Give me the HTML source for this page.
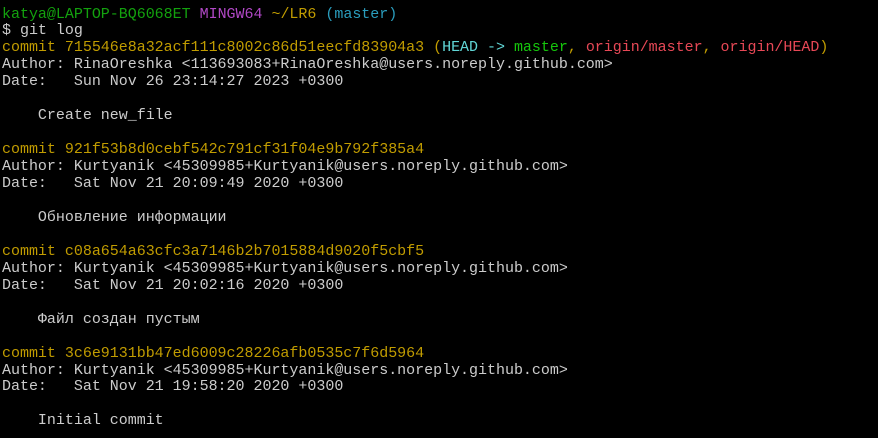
<!DOCTYPE html>
<html><head><meta charset="utf-8"><style>
html,body{margin:0;background:#000;width:878px;height:438px;overflow:hidden}
pre{margin:0;position:absolute;left:2px;top:6.5px;font-family:"Liberation Mono","DejaVu Sans Mono",monospace;font-size:15px;line-height:16.95px;letter-spacing:-0.02px;color:#cccccc;white-space:pre}
.g{color:#13a10e}.m{color:#b148c6}.y{color:#c19c00}.t{color:#2a9dbd}.c{color:#61d6d6}.lg{color:#16c60c}.r{color:#e74856}
</style></head><body><pre><span class="g">katya@LAPTOP-BQ6068ET</span> <span class="m">MINGW64</span> <span class="y">~/LR6</span> <span class="t">(master)</span>
$ git log
<span class="y">commit 715546e8a32acf111c8002c86d51eecfd83904a3 (</span><span class="c">HEAD -&gt; </span><span class="lg">master</span><span class="y">, </span><span class="r">origin/master</span><span class="y">, </span><span class="r">origin/HEAD</span><span class="y">)</span>
Author: RinaOreshka &lt;113693083+RinaOreshka@users.noreply.github.com&gt;
Date:   Sun Nov 26 23:14:27 2023 +0300

    Create new_file

<span class="y">commit 921f53b8d0cebf542c791cf31f04e9b792f385a4</span>
Author: Kurtyanik &lt;45309985+Kurtyanik@users.noreply.github.com&gt;
Date:   Sat Nov 21 20:09:49 2020 +0300

    Обновление информации

<span class="y">commit c08a654a63cfc3a7146b2b7015884d9020f5cbf5</span>
Author: Kurtyanik &lt;45309985+Kurtyanik@users.noreply.github.com&gt;
Date:   Sat Nov 21 20:02:16 2020 +0300

    Файл создан пустым

<span class="y">commit 3c6e9131bb47ed6009c28226afb0535c7f6d5964</span>
Author: Kurtyanik &lt;45309985+Kurtyanik@users.noreply.github.com&gt;
Date:   Sat Nov 21 19:58:20 2020 +0300

    Initial commit</pre></body></html>
